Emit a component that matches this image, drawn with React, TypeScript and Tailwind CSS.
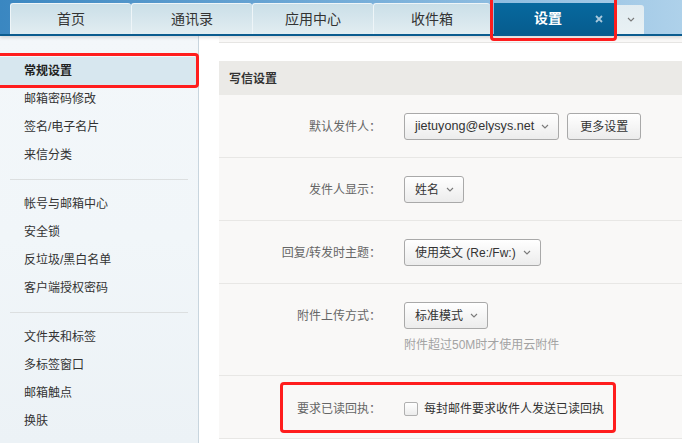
import React from "react";

const Chevron = ({ className = "" }: { className?: string }) => (
  <svg className={className} width="8" height="5" viewBox="0 0 8 5" fill="none">
    <path d="M1 1 L4 4 L7 1" stroke="#7a7a7a" strokeWidth="1.1" />
  </svg>
);

const Tab = ({ label, w }: { label: string; w: string }) => (
  <div
    className={`${w} h-[31px] rounded-t-[3px] bg-linear-to-b from-[#cadfe8] to-[#e2edf1] border-l border-t border-[#eef5f8] flex items-center justify-center text-[14px] text-[#333]`}
  >
    {label}
  </div>
);

const SideItem = ({ label, active = false }: { label: string; active?: boolean }) => (
  <div
    className={`h-[28px] flex items-center pl-[24px] text-[12px] ${
      active ? "bg-[#d7e7ef] font-bold text-[#222]" : "text-[#333]"
    }`}
  >
    {label}
  </div>
);

const Sep = () => <div className="mx-[10px] my-[10px] h-px bg-[#dcdfe0]" />;

const Select = ({ children }: { children: React.ReactNode }) => (
  <div className="inline-flex items-center h-[27px] pl-[10px] pr-[9px] border border-[#a9a9a9] rounded-[3px] bg-linear-to-b from-white to-[#ececec] text-[12px] text-[#333] whitespace-nowrap">
    {children}
    <Chevron className="ml-[7px]" />
  </div>
);

const Row = ({
  label,
  children,
  className = "pt-[18px] pb-[17px]",
}: {
  label: string;
  children: React.ReactNode;
  className?: string;
}) => (
  <div className={`flex border-b border-[#e8e7e5] bg-[#f9f8f7] ${className}`}>
    <div className="w-[162px] h-[27px] flex items-center justify-end text-[12px] text-[#666] shrink-0">
      {label}
    </div>
    <div className="ml-[23px] flex flex-col">{children}</div>
  </div>
);

export default function App() {
  return (
    <div className="relative w-[682px] h-[443px] overflow-hidden font-['Liberation_Sans','Noto_Sans_CJK_SC',sans-serif] bg-white">
      {/* tab bar */}
      <div className="relative z-10 h-[36px] bg-linear-to-r from-[#3a87c1] via-[#73acd8] to-[#aed1ea] shadow-[0_2px_3px_rgba(0,0,0,0.12)]">
        <div className="flex items-end h-[34px] pl-[10px]">
          <Tab label="首页" w="w-[121px]" />
          <Tab label="通讯录" w="w-[121px]" />
          <Tab label="应用中心" w="w-[121px]" />
          <Tab label="收件箱" w="w-[117px]" />
          <div className="ml-[4px] w-[120px] h-[31px] bg-linear-to-b from-[#07699f] to-[#075c8e] flex items-center text-white text-[14px] font-bold">
            <span className="ml-[40px]">设置</span>
            <svg className="ml-[33px]" width="8" height="8" viewBox="0 0 8 8">
              <path d="M1 1 L7 7 M7 1 L1 7" stroke="#a8c8dc" strokeWidth="1.8" />
            </svg>
          </div>
          <div className="ml-[3px] w-[27px] h-[29px] rounded-tr-[3px] bg-linear-to-b from-[#e1ecf1] to-[#e9f1f4] flex items-center justify-center">
            <Chevron />
          </div>
        </div>
        <div className="h-[2px] bg-[#0b5c8f]" />
      </div>

      <div className="flex h-[407px]">
        {/* sidebar */}
        <div className="w-[199px] shrink-0 border-r border-[#c8d5de] bg-linear-to-b from-[#f3f7fa] via-[#f1f6f9] to-[#ecf2f6] pt-[21px]">
          <SideItem label="常规设置" active />
          <SideItem label="邮箱密码修改" />
          <SideItem label="签名/电子名片" />
          <SideItem label="来信分类" />
          <Sep />
          <SideItem label="帐号与邮箱中心" />
          <SideItem label="安全锁" />
          <SideItem label="反垃圾/黑白名单" />
          <SideItem label="客户端授权密码" />
          <Sep />
          <SideItem label="文件夹和标签" />
          <SideItem label="多标签窗口" />
          <SideItem label="邮箱触点" />
          <SideItem label="换肤" />
        </div>

        {/* main */}
        <div className="flex-1 pl-[20px] bg-white">
          <div className="h-[7px] bg-[#f9f8f7] border-b border-[#e6e5e3]" />
          <div className="mt-[18px]">
            <div className="h-[34px] bg-[#ebeae7] flex items-center pl-[10px] pt-[2px] text-[12px] font-bold text-[#333]">
              写信设置
            </div>
            <Row label="默认发件人：">
              <div className="flex items-center">
                <Select>
                  <span className="text-[12.6px]">jietuyong@elysys.net</span>
                </Select>
                <div className="ml-[8px] h-[27px] w-[74px] flex items-center justify-center border border-[#a9a9a9] rounded-[3px] bg-linear-to-b from-white to-[#ececec] text-[12px] text-[#333]">
                  更多设置
                </div>
              </div>
            </Row>
            <Row label="发件人显示：">
              <div className="flex">
                <Select>姓名</Select>
              </div>
            </Row>
            <Row label="回复/转发时主题：">
              <div className="flex">
                <Select>使用英文 (Re:/Fw:)</Select>
              </div>
            </Row>
            <Row label="附件上传方式：" className="pt-[18px] pb-[22px]">
              <div className="flex">
                <Select>标准模式</Select>
              </div>
              <div className="mt-[8px] h-[16px] leading-[16px] text-[12px] text-[#a3a3a3]">
                附件超过50M时才使用云附件
              </div>
            </Row>
            <Row label="要求已读回执：" className="pt-[19px] pb-[16px]">
              <div className="h-[27px] flex items-center">
                <div className="w-[14px] h-[14px] rounded-[2px] border border-[#b0b0b0] bg-linear-to-b from-white to-[#ececec]" />
                <span className="ml-[6px] text-[12px] text-[#333]">每封邮件要求收件人发送已读回执</span>
              </div>
            </Row>
          </div>
        </div>
      </div>

      {/* red annotation boxes */}
      <div className="absolute z-20 left-[490px] top-[-4px] w-[127px] h-[45px] border-[3px] border-[#ff1d1d] rounded-[4px] pointer-events-none" />
      <div className="absolute z-20 left-[-6px] top-[53px] w-[205px] h-[35px] border-[3px] border-[#ff1d1d] rounded-[4px] pointer-events-none" />
      <div className="absolute z-20 left-[280px] top-[382px] w-[336px] h-[51px] border-[3px] border-[#ff1d1d] rounded-[4px] pointer-events-none" />
    </div>
  );
}
